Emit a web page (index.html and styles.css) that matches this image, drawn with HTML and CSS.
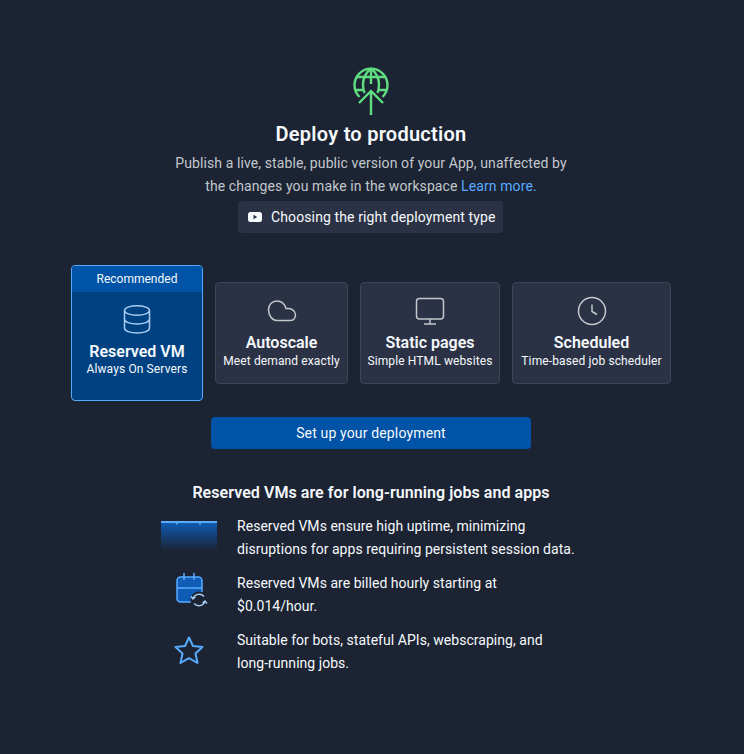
FILE: index.html
```html
<!DOCTYPE html>
<html lang="en">
<head>
<meta charset="utf-8">
<title>Deploy to production</title>
<link rel="stylesheet" href="styles.css">
</head>
<body>
<main class="page">
  <svg class="hero-icon" width="38" height="50" viewBox="0 0 38 50" fill="none" stroke="#5fdd80" stroke-width="2.4">
    <path d="M7.500 30A16.500 16.500 0 1 1 30.500 30"/>
    <path d="M19 1.500C13.500 6 11 12 11 17.500C11 20.500 11.500 23.500 12.500 26"/>
    <path d="M19 1.500C24.500 6 27 12 27 17.500C27 20.500 26.500 23.500 25.500 26"/>
    <path d="M4.500 10H33.500M3 23H11.500M26.500 23H35M19 1.500V17"/>
    <path d="M19 48V23.500M7 36L19 24L31 36"/>
  </svg>
  <h1 class="title">Deploy to production</h1>
  <p class="intro">Publish a live, stable, public version of your App, unaffected by<br>the changes you make in the workspace <a class="link" href="#">Learn more.</a></p>
  <a class="video" href="#">
    <svg class="video-icon" width="14" height="10" viewBox="0 0 14 10"><rect width="14" height="10" rx="2.500" fill="#f5f9fc"/><path d="M5.500 2.800v4.400l3.600-2.200z" fill="#2b3245"/></svg>
    Choosing the right deployment type
  </a>
  <div class="options">
    <div class="option selected">
      <div class="ribbon">Recommended</div>
      <div class="option-body">
        <svg class="option-icon" width="30" height="30" viewBox="0 0 30 30" fill="none" stroke="#a9cdf2" stroke-width="1.500">
          <ellipse cx="15" cy="6.500" rx="12.500" ry="4.800"/>
          <path d="M2.500 6.500V24C2.500 27 8 29 15 29S27.500 27 27.500 24V6.500M2.500 15C2.500 18 8 20 15 20S27.500 18 27.500 15"/>
        </svg>
        <strong class="option-name">Reserved VM</strong>
        <span class="option-desc">Always On Servers</span>
      </div>
    </div>
    <div class="option">
      <div class="option-body">
        <svg class="option-icon" width="30" height="30" viewBox="0 0 30 30" fill="none" stroke="#c2c8cc" stroke-width="1.500">
          <path d="M10 24.500H23C26.500 24.500 28.500 22 28.500 19C28.500 15.500 25.500 12.500 21.500 12.500H19C17.500 7.500 14 5 10 5C5 5 1.500 9 1.500 13.500C1.500 19.500 5 24.500 10 24.500Z"/>
        </svg>
        <strong class="option-name">Autoscale</strong>
        <span class="option-desc">Meet demand exactly</span>
      </div>
    </div>
    <div class="option">
      <div class="option-body">
        <svg class="option-icon" width="30" height="30" viewBox="0 0 30 30" fill="none" stroke="#c2c8cc" stroke-width="1.500">
          <rect x="1.500" y="2.500" width="27" height="20.500" rx="3"/>
          <path d="M15 23V28M9 28H21"/>
        </svg>
        <strong class="option-name">Static pages</strong>
        <span class="option-desc">Simple HTML websites</span>
      </div>
    </div>
    <div class="option">
      <div class="option-body">
        <svg class="option-icon" width="30" height="30" viewBox="0 0 30 30" fill="none" stroke="#c2c8cc" stroke-width="1.500">
          <circle cx="15" cy="15" r="13.500"/>
          <path d="M15 8.500V15.500L20 18.500"/>
        </svg>
        <strong class="option-name">Scheduled</strong>
        <span class="option-desc">Time-based job scheduler</span>
      </div>
    </div>
  </div>
  <button class="cta" type="button">Set up your deployment</button>
  <h2 class="subtitle">Reserved VMs are for long-running jobs and apps</h2>
  <ul class="features">
    <li class="feature">
      <span class="feature-icon server">
        <svg width="56" height="30" viewBox="0 0 56 30">
          <defs><linearGradient id="fade" x1="0" y1="0" x2="0" y2="1"><stop offset="0" stop-color="#0f5cb5"/><stop offset="1" stop-color="#0f5cb5" stop-opacity="0"/></linearGradient></defs>
          <rect y="1" width="56" height="29" fill="url(#fade)"/>
          <path d="M0 1H56" stroke="#57abff" stroke-width="2"/>
          <path d="M14 1h4l-2 3zM37 1h4l-2 3z" fill="#57abff"/>
        </svg>
      </span>
      <span>Reserved VMs ensure high uptime, minimizing<br>disruptions for apps requiring persistent session data.</span>
    </li>
    <li class="feature">
      <span class="feature-icon calendar">
        <svg width="32" height="35" viewBox="0 0 32 35" fill="none">
          <rect x="1" y="4" width="25" height="25" rx="3.500" fill="#0f5cb5" stroke="#57abff" stroke-width="1.500"/>
          <path d="M1 15H26M8 0V7M18 0V7" stroke="#57abff" stroke-width="1.500"/>
          <circle cx="23" cy="27" r="8.500" fill="#1c2333"/>
          <path d="M17 25.500A6.500 6.500 0 0 1 28 23.500M29 28.500A6.500 6.500 0 0 1 18 30.500M15 23.500L17 26L19.500 24M31 30.500L29 28L26.500 30" stroke="#a9cdf2" stroke-width="1.300"/>
        </svg>
      </span>
      <span>Reserved VMs are billed hourly starting at<br>$0.014/hour.</span>
    </li>
    <li class="feature">
      <span class="feature-icon star">
        <svg width="30" height="28" viewBox="0 0 30 28" fill="none">
          <path d="M15 1.500L19 10L28.500 11L21.500 17.500L23.500 27L15 22.200L6.500 27L8.500 17.500L1.500 11L11 10Z" stroke="#57abff" stroke-width="2" stroke-linejoin="round"/>
        </svg>
      </span>
      <span>Suitable for bots, stateful APIs, webscraping, and<br>long-running jobs.</span>
    </li>
  </ul>
</main>
</body>
</html>
```
FILE: styles.css
```css
* { box-sizing: border-box; }
html, body { margin: 0; height: 100%; }
body {
  background: #1c2333;
  color: #f5f9fc;
  font-family: Roboto, "Liberation Sans", sans-serif;
  font-size: 14px;
}
.page {
  display: flex;
  flex-direction: column;
  align-items: center;
  padding: 67px 2px 0 0;
}
.hero-icon { display: block; }
.title {
  margin: 3px 0 0;
  font-size: 20px;
  line-height: 28px;
  font-weight: 600;
  letter-spacing: 0.25px;
}
.intro {
  margin: 4px 0 0;
  color: #c2c8cc;
  line-height: 23px;
  text-align: center;
  letter-spacing: 0.1px;
}
.link { color: #57abff; text-decoration: none; }
.video {
  display: flex;
  align-items: center;
  gap: 9px;
  height: 32px;
  margin: 3px 1px 0 0;
  padding: 0 10px;
  width: 265px;
  border-radius: 4px;
  background: #2b3245;
  color: #f5f9fc;
  text-decoration: none;
  letter-spacing: 0.12px;
  white-space: nowrap;
}
.video-icon { flex: none; }
.options {
  display: flex;
  align-items: center;
  gap: 12px;
  margin-top: 32px;
}
.option {
  display: flex;
  flex-direction: column;
  height: 102px;
  border: 1px solid #3d4459;
  border-radius: 4px;
  background: #2b3245;
  width: 133px;
}
.option:nth-child(1) { width: 132px; }
.option:nth-child(3) { width: 140px; }
.option:nth-child(4) { width: 159px; }
.option.selected {
  height: 136px;
  border-color: #57abff;
  background: #004182;
  overflow: hidden;
}
.ribbon {
  height: 26px;
  background: #0053a6;
  color: #f5f9fc;
  font-size: 12px;
  line-height: 26px;
  text-align: center;
}
.option-body {
  display: flex;
  flex-direction: column;
  align-items: center;
  padding-top: 13px;
}
.selected .option-body { padding-top: 12px; }
.option-icon { display: block; }
.option-name {
  margin-top: 7px;
  font-size: 16px;
  line-height: 20px;
  font-weight: 600;
}
.selected .option-name { margin-top: 8px; }
.option-desc {
  font-size: 12px;
  line-height: 16px;
  letter-spacing: 0.12px;
}
.selected .option-desc { margin-top: -1px; }
.cta {
  display: block;
  width: 320px;
  height: 32px;
  margin-top: 16px;
  border: 0;
  border-radius: 4px;
  background: #0053a6;
  color: #f5f9fc;
  font: inherit;
  letter-spacing: 0.15px;
}
.subtitle {
  margin: 33px 0 0;
  font-size: 16px;
  line-height: 22px;
  font-weight: 600;
  letter-spacing: 0.06px;
}
.features {
  list-style: none;
  margin: 11px 0 0;
  padding: 0;
  display: flex;
  flex-direction: column;
  gap: 11px;
  width: 420px;
}
.feature {
  display: flex;
  gap: 20px;
  line-height: 23px;
  color: #f5f9fc;
  min-height: 46px;
  letter-spacing: 0.04px;
}
.feature-icon {
  flex: 0 0 56px;
  display: flex;
  justify-content: center;
  align-items: flex-start;
}
.feature-icon svg { display: block; }
.server svg { margin-top: 6px; }
.calendar svg { margin: 1px 0 0 5px; }
.star svg { margin-top: 7px; }
```
